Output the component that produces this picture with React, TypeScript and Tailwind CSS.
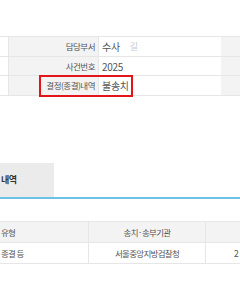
import React from "react";

const font = { fontFamily: '"Noto Sans CJK KR", "Noto Sans", sans-serif' };

const infoRows = [
  { label: "담당부서", value: "수사", extra: "길", h: "h-[20px]" },
  { label: "사건번호", value: "2025", extra: "", h: "h-[19px]" },
  { label: "결정(종결)내역", value: "불송치", extra: "", h: "h-[20px]", marked: true },
];

export default function App() {
  return (
    <div className="w-[240px] h-[300px] overflow-hidden bg-white text-[8.5px] text-[#555]" style={font}>
      {/* case info table */}
      <div className="pt-[36px]">
        <div className="border-t border-[#e6e6e6]">
          {infoRows.map((row) => (
            <div key={row.label} className={`grid grid-cols-[9px_90px_122px_1fr] border-b border-[#e6e6e6] ${row.h}`}>
              <div className="border-r border-[#e6e6e6]" />
              <div className="relative flex items-center justify-end bg-[#f3f3f3] pr-[3px] border-r border-[#e6e6e6]">
                {row.marked && (
                  <div className="absolute left-[30px] top-[-1px] w-[94px] h-[22px] border-2 border-[#e4141b] z-10" />
                )}
                <span className="tracking-[-0.5px]">{row.label}</span>
              </div>
              <div className="flex items-center pl-[3px] gap-[10px]">
                <span className="text-[10px] tracking-[-0.3px]">{row.value}</span>
                {row.extra && <span className="text-[#c8c8d8] text-[9px]">{row.extra}</span>}
              </div>
              <div className="bg-[#f3f3f3]" />
            </div>
          ))}
        </div>
      </div>

      {/* tabs */}
      <div className="mt-[67px] border-b-2 border-[#6cc1e6]">
        <div className="w-[54px] h-[34px] bg-[#ebebeb] flex items-center">
          <span className="font-bold text-[9px] text-[#333] pl-[1px] tracking-[-0.5px]">내역</span>
        </div>
      </div>

      {/* result table */}
      <div className="mt-[22px] border-t border-[#e6e6e6] border-b tracking-[-0.7px]">
        <div className="grid grid-cols-[89px_117px_1fr] h-[21px] bg-[#f3f3f3] border-b border-[#e6e6e6]">
          <div className="flex items-center border-r border-[#e6e6e6] pl-[1px]">
            <span>유형</span>
          </div>
          <div className="flex items-center justify-center border-r border-[#e6e6e6]">송치·송부기관</div>
          <div />
        </div>
        <div className="grid grid-cols-[89px_117px_1fr] h-[20px] bg-white">
          <div className="flex items-center border-r border-[#e6e6e6] pl-[1px]">
            <span>종결 등</span>
          </div>
          <div className="flex items-center justify-center border-r border-[#e6e6e6]">서울중앙지방검찰청</div>
          <div className="flex items-center pl-[28px] tracking-normal">2</div>
        </div>
      </div>
    </div>
  );
}
